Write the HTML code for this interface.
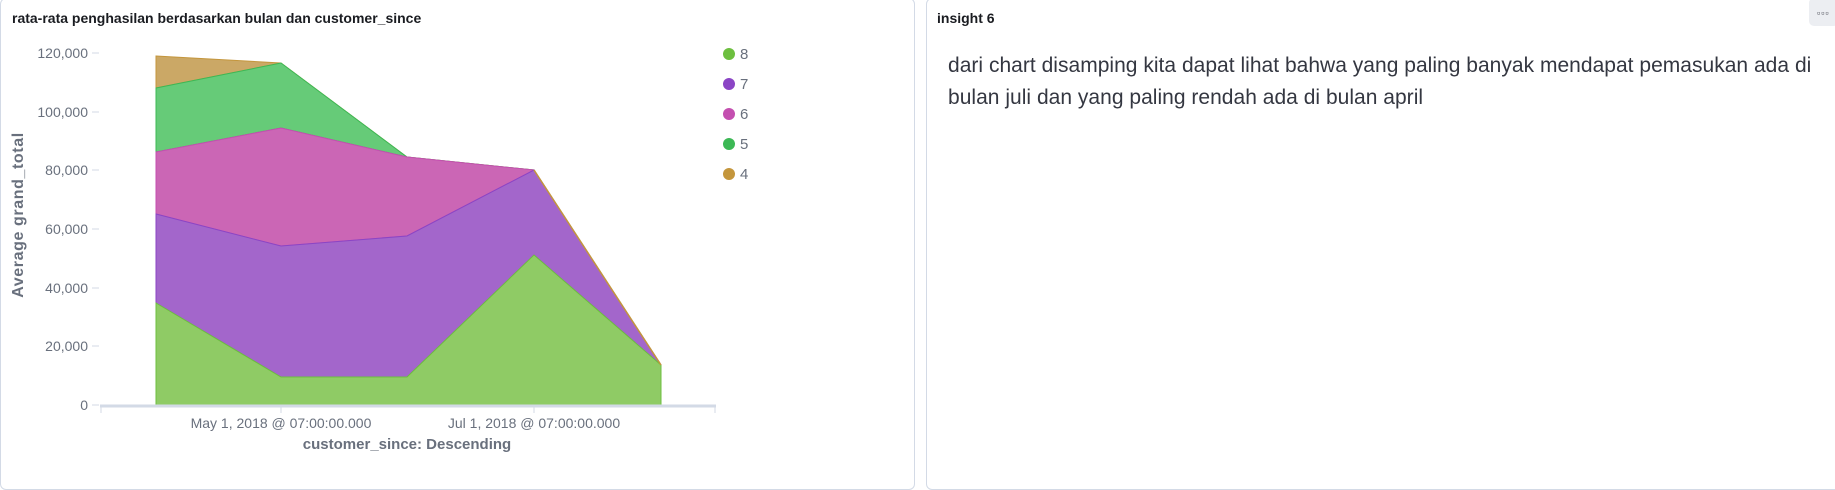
<!DOCTYPE html>
<html><head><meta charset="utf-8"><style>
html,body{margin:0;padding:0;background:#fff;width:1835px;height:477px;overflow:hidden;font-family:"Liberation Sans",Arial,sans-serif;}
.panel{position:absolute;top:-2px;height:490px;border:1px solid #d3dae6;border-radius:6px;background:#fff;}
.title{position:absolute;font-size:14px;font-weight:bold;color:#1a1c21;}
.body{position:absolute;left:948px;top:50px;font-size:21px;letter-spacing:0.02px;line-height:32px;color:#343741;white-space:nowrap;}
.menu{position:absolute;left:1809px;top:-2px;width:30px;height:28px;background:#eceef2;border-radius:5px;}
</style></head><body>
<div class="panel" style="left:0;width:913px;"></div>
<div class="panel" style="left:926px;width:920px;"></div>
<div class="title" style="left:12px;top:10px;">rata-rata penghasilan berdasarkan bulan dan customer_since</div>
<div class="title" style="left:937px;top:10px;">insight 6</div>
<div class="body">dari chart disamping kita dapat lihat bahwa yang paling banyak mendapat pemasukan ada di<br>bulan juli dan yang paling rendah ada di bulan april</div>
<div class="menu"><div style="position:absolute;left:8px;top:10px;font-size:9px;letter-spacing:1px;color:#343741;">▫▫▫</div></div>
<svg width="920" height="477" style="position:absolute;left:0;top:0" font-family="Liberation Sans, Arial, sans-serif">
<g font-size="14" fill="#69707d" text-anchor="end">
<text x="88" y="58">120,000</text><text x="88" y="117">100,000</text><text x="88" y="175">80,000</text>
<text x="88" y="234">60,000</text><text x="88" y="293">40,000</text><text x="88" y="351">20,000</text><text x="88" y="410">0</text>
</g>
<g stroke="#d3dae6"><line x1="92" y1="53" x2="99" y2="53"/><line x1="92" y1="112" x2="99" y2="112"/><line x1="92" y1="170" x2="99" y2="170"/><line x1="92" y1="229" x2="99" y2="229"/><line x1="92" y1="288" x2="99" y2="288"/><line x1="92" y1="346" x2="99" y2="346"/><line x1="92" y1="405" x2="99" y2="405"/></g>
<text transform="translate(23,215) rotate(-90)" text-anchor="middle" font-size="16" letter-spacing="0.6" font-weight="bold" fill="#69707d">Average grand_total</text>
<polygon points="156,56 281,63 407,157 534,170 661,365 534,170 407,157 281,63 156,88" fill="#cba866" stroke="#c4963c"/>
<polygon points="156,88 281,63 407,157 534,170 661,365 534,170 407,157 281,128 156,152" fill="#66cb78" stroke="#3cb855"/>
<polygon points="156,152 281,128 407,157 534,170 661,365 534,170 407,236 281,246 156,214" fill="#cb66b5" stroke="#c44fb0"/>
<polygon points="156,214 281,246 407,236 534,170 661,365 534,255 407,377 281,377 156,303" fill="#a366cb" stroke="#8b45c5"/>
<polygon points="156,303 281,377 407,377 534,255 661,365 661,405 156,405" fill="#8fcb65" stroke="#6dbf3f"/>
<polyline points="534,170 661,365" fill="none" stroke="#c4963c" stroke-width="1.5"/>
<line x1="100" y1="406" x2="716" y2="406" stroke="#d3dae6" stroke-width="3"/>
<g stroke="#d3dae6"><line x1="101" y1="406" x2="101" y2="413"/><line x1="281" y1="406" x2="281" y2="413"/><line x1="534" y1="406" x2="534" y2="413"/><line x1="715" y1="406" x2="715" y2="413"/></g>
<g font-size="14" fill="#69707d" text-anchor="middle"><text x="281" y="428">May 1, 2018 @ 07:00:00.000</text><text x="534" y="428">Jul 1, 2018 @ 07:00:00.000</text></g>
<text x="407" y="449" text-anchor="middle" font-size="15" font-weight="bold" fill="#69707d">customer_since: Descending</text>
<g font-size="15" fill="#69707d">
<circle cx="729" cy="54" r="6" fill="#6dbf3f"/><text x="740" y="59">8</text>
<circle cx="729" cy="84" r="6" fill="#8b45c5"/><text x="740" y="89">7</text>
<circle cx="729" cy="114" r="6" fill="#c44fb0"/><text x="740" y="119">6</text>
<circle cx="729" cy="144" r="6" fill="#3cb855"/><text x="740" y="149">5</text>
<circle cx="729" cy="174" r="6" fill="#c4963c"/><text x="740" y="179">4</text>
</g>
</svg>
</body></html>
